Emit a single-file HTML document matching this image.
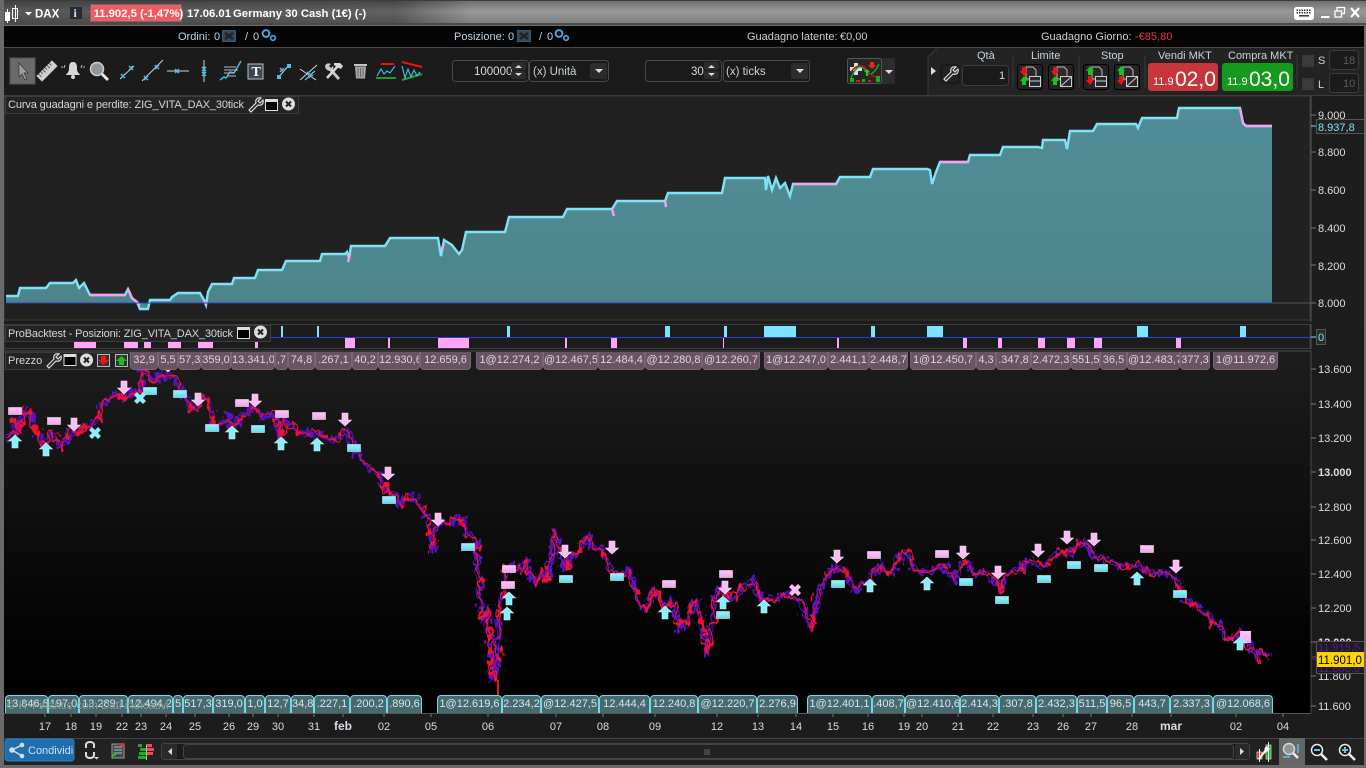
<!DOCTYPE html>
<html><head><meta charset="utf-8"><title>DAX</title>
<style>
html,body{margin:0;padding:0;background:#1a1a1a;width:1366px;height:768px;overflow:hidden}
body{position:relative;font-family:"Liberation Sans",Arial,sans-serif}
svg.m{position:absolute;left:0;top:0}
svg text{font-family:"Liberation Sans",Arial,sans-serif;font-size:11px;fill:#d6dde4}
.l,.b{position:absolute;font-size:11px;text-align:center;overflow:hidden;white-space:nowrap;box-sizing:border-box}
.l{top:352px;height:18px;line-height:17px;background:#6a5365;border:1px solid #7d6378;border-top:none;border-radius:0 0 4px 4px;color:#ddd6dc}
.b{top:695px;height:18px;line-height:17px;background:#456a6f;border:1px solid #72d8ec;border-bottom:none;border-radius:4px 4px 0 0;color:#dde6e6}
.wm{position:absolute;left:7px;top:700px;font-size:11.5px;color:#8f9a9a;white-space:nowrap}
</style></head><body>
<svg class="m" width="1366" height="768" viewBox="0 0 1366 768">
<defs>
<linearGradient id="tb" x1="0" y1="0" x2="0" y2="1"><stop offset="0" stop-color="#6b6b6b"/><stop offset=".45" stop-color="#989898"/><stop offset="1" stop-color="#7c7c7c"/></linearGradient>
<linearGradient id="tbl" x1="0" y1="0" x2="1" y2="0"><stop offset="0" stop-color="#000" stop-opacity=".42"/><stop offset=".29" stop-color="#000" stop-opacity=".36"/><stop offset=".345" stop-color="#000" stop-opacity="0"/></linearGradient>
<linearGradient id="pg" x1="0" y1="0" x2="0" y2="1"><stop offset="0" stop-color="#1d1d1d"/><stop offset=".8" stop-color="#030303"/><stop offset="1" stop-color="#000"/></linearGradient>
<linearGradient id="cy" x1="0" y1="0" x2="0" y2="1"><stop offset="0" stop-color="#9ff0fb"/><stop offset="1" stop-color="#62d9ec"/></linearGradient>
<linearGradient id="pk" x1="0" y1="0" x2="0" y2="1"><stop offset="0" stop-color="#fbc8f6"/><stop offset="1" stop-color="#f2a5ea"/></linearGradient>
<linearGradient id="eq" x1="0" y1="0" x2="0" y2="1"><stop offset="0" stop-color="#518d97"/><stop offset="1" stop-color="#4d848c"/></linearGradient>
<filter id="jit" filterUnits="userSpaceOnUse" x="0" y="350" width="1310" height="350" color-interpolation-filters="sRGB"><feTurbulence type="fractalNoise" baseFrequency="0.16 0.09" numOctaves="2" seed="4"/><feDisplacementMap in="SourceGraphic" scale="20" xChannelSelector="R" yChannelSelector="G"/></filter>
<filter id="jit2" filterUnits="userSpaceOnUse" x="0" y="350" width="1310" height="350" color-interpolation-filters="sRGB"><feTurbulence type="fractalNoise" baseFrequency="0.14 0.08" numOctaves="2" seed="11"/><feDisplacementMap in="SourceGraphic" scale="18" xChannelSelector="R" yChannelSelector="G"/></filter>
<filter id="jit3" filterUnits="userSpaceOnUse" x="0" y="350" width="1310" height="350" color-interpolation-filters="sRGB"><feTurbulence type="fractalNoise" baseFrequency="0.18 0.1" numOctaves="2" seed="23"/><feDisplacementMap in="SourceGraphic" scale="16" xChannelSelector="R" yChannelSelector="G"/></filter>
<g id="ad"><path d="M-3-13h6v7h3.500L0 0-6.500-6h3.500z" fill="#f8bff2" stroke="#fbdcf8" stroke-width=".6"/></g>
<g id="au"><path d="M-3 13h6v-7h3.500L0 0-6.500 6h3.500z" fill="#8beefa" stroke="#c6f7fc" stroke-width=".6"/></g>
<rect id="rp" x="-6.500" y="-3.500" width="13" height="7" fill="url(#pk)" stroke="#f9dcf6" stroke-width=".6"/>
<rect id="rc" x="-6.500" y="-3.500" width="13" height="7" fill="url(#cy)" stroke="#bff5fb" stroke-width=".6"/>
<path id="xc" d="M-6-3l3-3 3 3 3-3 3 3-3 3 3 3-3 3-3-3-3 3-3-3 3-3z"/>
<path id="px" d="M6 440 10 435 14 432 17 420 20 432 24 410 30 415 36 430 42 448 48 437 53 432 58 443 62 448 70 430 78 435 85 425 92 428 97 420 102 405 110 397 118 395 124 400 130 393 135 390 140 398 143 368 150 378 155 378 165 375 175 377 182 390 186 400 192 410 198 408 205 395 212 415 213 428 220 425 228 415 232 430 240 418 248 415 255 405 262 420 270 412 278 420 280 443 285 420 295 430 305 435 315 432 322 437 335 440 345 430 355 445 360 460 370 468 380 475 385 490 395 495 400 505 410 495 420 505 428 518 432 553 435 530 440 520 450 525 460 516 468 535 476 540 480 590 483 620 487 610 490 640 493 680 497 665 500 610 505 570 512 565 520 575 525 560 530 575 537 585 542 570 547 580 555 527 560 550 565 570 573 555 580 550 588 535 595 550 602 548 608 565 617 575 630 570 637 600 645 610 655 590 665 610 672 600 680 630 690 615 697 600 707 655 715 600 722 585 730 600 740 590 755 580 760 600 770 600 785 595 800 600 812 630 818 590 825 580 835 565 845 570 855 590 870 580 880 565 890 575 905 550 915 570 925 572 935 570 945 565 955 580 965 560 975 575 985 570 1000 590 1005 575 1020 570 1030 560 1045 565 1060 550 1070 555 1080 540 1095 555 1105 560 1120 565 1135 565 1150 575 1165 570 1175 580 1185 598 1200 610 1212 620 1222 630 1228 640 1235 635 1240 632 1245 640 1250 648 1257 660 1262 650 1270 658"/>
<g id="gear"><circle cx="5" cy="4.500" r="3.400" fill="none" stroke="#4aa5e0" stroke-width="2"/><circle cx="12" cy="9" r="2.300" fill="none" stroke="#4aa5e0" stroke-width="1.600"/></g>
<g id="xb"><rect x=".5" y=".5" width="13" height="11" fill="#3a4650" stroke="#2f5c7c"/><path d="M3 3l8 6M11 3l-8 6" stroke="#1b2228" stroke-width="2.400"/></g>
<g id="w"><path d="M2 14l7-7c-1-3 1-6 5-5l-3 3 2 2 3-3c1 4-2 6-5 5l-7 7z" fill="none" stroke="#ddd" stroke-width="1.200"/></g>
<g id="ordb"><rect x=".5" y=".5" width="25" height="25" rx="3" fill="#242424" stroke="#000"/><path d="M9 3h7l3 3v9H9z" fill="#2a2a2a" stroke="#bbb"/></g>
<clipPath id="pc"><rect x="4" y="370" width="1306" height="325"/></clipPath>
</defs>

<!-- frame -->
<rect width="1366" height="768" fill="#6e6e6e"/>
<rect x="0" y="0" width="1366" height="25" fill="url(#tb)"/>
<rect x="0" y="0" width="1366" height="25" fill="url(#tbl)"/>
<rect x="0" y="0" width="1366" height="1" fill="#3c3c3c"/>
<rect x="0" y="23" width="1366" height="2" fill="#4a4a4a"/>
<!-- title bar -->
<g fill="#fff"><rect x="5" y="12" width="5" height="9"/><rect x="7" y="9" width="1" height="14"/><rect x="12.500" y="8.500" width="5" height="10" fill="none" stroke="#fff"/><rect x="15" y="5" width="1" height="17"/><path d="M25 12h7l-3.500 3.500z"/></g>
<text x="35" y="17.500" style="fill:#fff;font-weight:bold;font-size:11.500px">DAX</text>
<rect x="70" y="7" width="12" height="12" fill="#252a35"/><text x="73.500" y="17" style="fill:#dfe3e6;font-weight:bold;font-family:'Liberation Serif';font-size:12px">i</text>
<rect x="91" y="5" width="90" height="16" fill="#ef5b60" stroke="#d9797c" stroke-width=".8"/>
<text x="93.500" y="17" style="fill:#fff;font-weight:bold;font-size:11.300px">11.902,5 (-1,47%)</text>
<text x="187" y="17" style="fill:#fff;font-weight:bold;font-size:11.300px">17.06.01</text>
<text x="233" y="17" style="fill:#fff;font-weight:bold;font-size:11.300px">Germany 30 Cash (1€) (-)</text>
<rect x="1294" y="7" width="20" height="13" rx="2.500" fill="#fff"/><g fill="none" stroke="#333" stroke-width="1.500" stroke-dasharray="1.500 1"><path d="M1296.500 10.300h15M1296.500 12.800h15"/><path d="M1299 15.800h10" stroke-dasharray="none"/></g>
<rect x="1321" y="16" width="8.500" height="2" fill="#fff"/>
<path d="M1337 11v-3.500h7.500v6h-3M1335 11h6.500v6h-6.500z" fill="none" stroke="#fff" stroke-width="1.300"/>
<path d="M1351 8l8 9M1359 8l-8 9" stroke="#fff" stroke-width="2.200"/>

<!-- info bar -->
<rect x="4" y="26" width="1362" height="21" fill="#050505"/>
<rect x="4" y="47" width="1362" height="1" fill="#4c4c4c"/>
<text x="178" y="40" style="fill:#bfd2e0">Ordini:</text><text x="214" y="40" style="fill:#bfd2e0">0</text><use href="#xb" x="222" y="30"/><text x="245" y="40" style="fill:#bfd2e0">/</text><text x="253" y="40" style="fill:#bfd2e0">0</text><use href="#gear" x="261" y="29"/>
<text x="454" y="40" style="fill:#bfd2e0">Posizione:</text><text x="508" y="40" style="fill:#bfd2e0">0</text><use href="#xb" x="517" y="30"/><text x="539" y="40" style="fill:#bfd2e0">/</text><text x="547" y="40" style="fill:#bfd2e0">0</text><use href="#gear" x="554" y="29"/>
<text x="747" y="40" style="fill:#c6d0d6">Guadagno latente:</text><text x="840" y="40" style="fill:#c6d0d6">€0,00</text>
<text x="1041" y="40" style="fill:#c6d0d6">Guadagno Giorno:</text><text x="1135" y="40" style="fill:#e5393b">-€85,80</text>

<!-- toolbar -->
<rect x="4" y="48" width="1362" height="47" fill="#1b1b1b"/>
<rect x="4" y="95" width="1362" height="1" fill="#3c3c3c"/>
<rect x="10" y="58" width="25" height="26" fill="#6a6a6a" stroke="#555"/>
<path d="M19 63v14l3-3 3 6 2-1-3-6h4z" fill="#9aa3a9" stroke="#333" stroke-width=".7"/>
<g transform="rotate(-45 47 71)"><rect x="36" y="67" width="22" height="8" fill="#cfcfcf"/><path d="M39 67v4M42 67v3M45 67v4M48 67v3M51 67v4M54 67v3" stroke="#555"/></g>
<path d="M73 62c-4 0-4 4-4 7 0 3-2 4-3 6h14c-1-2-3-3-3-6 0-3 0-7-4-7z" fill="#d8d8d8"/><circle cx="73" cy="77" r="2" fill="#d8d8d8"/><path d="M65 65l-1 3M82 65l-1 3M62 66l0 2M84 66l0 2" stroke="#bbb"/>
<circle cx="97" cy="69" r="6.500" fill="#8f979c" stroke="#cfcfcf" stroke-width="1.500"/><path d="M102 74l6 6" stroke="#e8e8e8" stroke-width="3"/>
<g stroke="#cfd6da" stroke-width="1" fill="none"><path d="M120 79l14-13"/><path d="M142 81l21-21"/><path d="M167 71h22"/><path d="M204 60v22"/></g>
<g stroke="#4fbfea" stroke-width="1.500"><path d="M121 74l4 4M125 74l-4 4M129 66l4 4M133 66l-4 4M144 76l4 4M148 76l-4 4M155 65l4 4M159 65l-4 4M175 69l4 4M179 69l-4 4M202 67l4 4M206 67l-4 4M202 72l4 4M206 72l-4 4"/></g>
<path d="M220 80l4-3 2 1 4-6 4 1 7-12" fill="none" stroke="#45b8ea" stroke-width="1.500"/><path d="M224 67h12M224 70h14M224 73h10M228 76h8" stroke="#bbb"/>
<rect x="248" y="64" width="15" height="15" fill="#3a4652" stroke="#b8c0c8"/><text x="251.500" y="76" style="font-family:'Liberation Serif';font-size:14px;font-weight:bold;fill:#fff">T</text>
<path d="M278 78l11-13" stroke="#cfd6da"/><rect x="277" y="75" width="4" height="4" fill="#4fbfea"/><rect x="287" y="64" width="4" height="4" fill="#4fbfea"/><path d="M280 68l4 4M284 68l-4 4" stroke="#4fbfea" stroke-width="1.500"/>
<path d="M300 80l17-15M300 69l16 11" stroke="#cfd6da"/><path d="M307 72l6 4M313 72l-4 6M305 80l10-9" stroke="#4fbfea" stroke-width="1.300"/>
<path d="M329 68l10 11" stroke="#c8c8c8" stroke-width="3"/><path d="M325 66c1-3 4-3 6-2l-2 2 2 2 2-2c1 2 0 5-3 5-2 0-5-2-5-5z" fill="#c8c8c8"/><path d="M338 66l-11 12" stroke="#d8d8d8" stroke-width="2.500"/><path d="M334 63h6l3 3-2 3-4-2-3-2z" fill="#d8d8d8"/>
<rect x="354" y="64" width="13" height="2" fill="#c4c4c4"/><path d="M355 66.500h11l-1 12h-9z" fill="#aaa"/><path d="M358 68v9M360.500 68v9M363 68v9" stroke="#666"/>
<path d="M381 64h13" stroke="#e81414" stroke-width="2"/><path d="M376 78h20" stroke="#1ea01e" stroke-width="2"/><path d="M377 76l4-7 3 5 3-3 3 2 5-7" fill="none" stroke="#3cc0ea" stroke-width="1.100"/>
<path d="M402 62l20 5" stroke="#e81414" stroke-width="2"/><path d="M402 80l20-6" stroke="#1ea01e" stroke-width="2"/><path d="M402 66l3 12 3-9 3 8 3-7 3 6 3-4" fill="none" stroke="#3cc0ea" stroke-width="1.100"/>

<!-- inputs -->
<g fill="#1a1a1a" stroke="#4a4a4a">
<rect x="452.500" y="60.500" width="76" height="21" rx="3"/><rect x="529.500" y="60.500" width="79" height="21" rx="3"/>
<rect x="645.500" y="60.500" width="76" height="21" rx="3"/><rect x="723.500" y="60.500" width="86" height="21" rx="3"/></g>
<text x="474" y="75" style="fill:#d5dce2;font-size:11.500px">100000</text><text x="533" y="75" style="fill:#c8d2da;font-size:11.500px">(x) Unità</text>
<text x="691" y="75" style="fill:#d5dce2;font-size:11.500px">30</text><text x="726" y="75" style="fill:#c8d2da;font-size:11.500px">(x) ticks</text>
<g fill="#2c2c2c"><rect x="511" y="62" width="15" height="8" rx="2"/><rect x="511" y="71" width="15" height="8" rx="2"/><rect x="704" y="62" width="15" height="8" rx="2"/><rect x="704" y="71" width="15" height="8" rx="2"/><rect x="590" y="63" width="17" height="16" rx="2"/><rect x="791" y="63" width="17" height="16" rx="2"/><rect x="882" y="58" width="13" height="26" rx="2"/></g>
<g fill="#ddd"><path d="M515 68h7l-3.500-3zM515 73h7l-3.500 3zM708 68h7l-3.500-3zM708 73h7l-3.500 3z"/><path d="M595 69h8l-4 4zM796 69h8l-4 4zM885 70h8l-4 4z"/></g>
<rect x="847.500" y="58.500" width="34" height="25" rx="2" fill="#262626" stroke="#555"/>
<path d="M854 63h4v4h4v4h-4v4h-4v-4h-4v-4h4z" fill="#d8dee2"/>
<path d="M851 78c5-12 10-14 14-8s8 6 14-6" fill="none" stroke="#1ea01e" stroke-width="1.500"/><path d="M851 72c6-8 12-8 16-2s8 8 12 6" fill="none" stroke="#b01818" stroke-width="1.500"/>
<path d="M864 72l3-3 3 3h-2v4h-2v-4z" fill="#16cf16"/><path d="M870 62h4v3h2l-4 4-4-4h2z" fill="#ee2020"/>
<g fill="#18b018"><rect x="850" y="78" width="4" height="4"/><rect x="862" y="79" width="3" height="3"/><rect x="876" y="76" width="4" height="6"/></g><g fill="#d02020"><rect x="856" y="80" width="4" height="2"/><rect x="868" y="80" width="3" height="2"/></g>

<!-- order panel -->
<path d="M928 95v-38l9-9h429v47z" fill="#232323"/>
<path d="M928 95v-38l9-9" fill="none" stroke="#3a3a3a"/>
<path d="M931 67l5 4-5 4z" fill="#ddd"/>
<rect x="941" y="65" width="18" height="18" rx="3" fill="#222" stroke="#111"/><use href="#w" x="942" y="65"/>
<rect x="962.500" y="65.500" width="46" height="20" rx="3" fill="#1b1b1b" stroke="#3c3c3c"/><text x="999" y="79" style="fill:#d8d8d8">1</text>
<text x="977" y="59" style="fill:#c8d4dc">Qtà</text><text x="1031" y="59" style="fill:#c8d4dc">Limite</text><text x="1101" y="59" style="fill:#c8d4dc">Stop</text><text x="1158" y="59" style="fill:#c8d4dc">Vendi MKT</text><text x="1228" y="59" style="fill:#c8d4dc">Compra MKT</text>
<path d="M1013 55v32M1079 55v32M1145 55v32M1297 55v32" stroke="#3b3b3b"/>
<use href="#ordb" x="1017" y="64"/><use href="#ordb" x="1048" y="64"/><use href="#ordb" x="1083" y="64"/><use href="#ordb" x="1114" y="64"/>
<g>
<rect x="1029.500" y="76.500" width="11" height="10" fill="#2a2a2a" stroke="#ccc"/><path d="M1030 81h10" stroke="#ccc"/>
<rect x="1060.500" y="76.500" width="11" height="10" fill="#2a2a2a" stroke="#ccc"/><path d="M1061 86l10-9" stroke="#ccc"/>
<rect x="1095.500" y="76.500" width="11" height="10" fill="#2a2a2a" stroke="#ccc"/><path d="M1096 81h10" stroke="#ccc"/>
<rect x="1126.500" y="76.500" width="11" height="10" fill="#2a2a2a" stroke="#ccc"/><path d="M1127 86l10-9" stroke="#ccc"/>
<path d="M1022 67h4v4h2l-4 5-4-5h2zM1053 67h4v4h2l-4 5-4-5h2z" fill="#e81414"/>
<path d="M1024 76l4 5h-2v4h-4v-4h-2zM1055 76l4 5h-2v4h-4v-4h-2z" fill="#15c515"/>
<path d="M1090 66l4 5h-2v4h-4v-4h-2zM1121 66l4 5h-2v4h-4v-4h-2z" fill="#15c515"/>
<path d="M1088 76h4v4h2l-4 5-4-5h2zM1119 76h4v4h2l-4 5-4-5h2z" fill="#e81414"/>
</g>
<rect x="1148" y="63" width="70" height="28" rx="3" fill="#c7363b"/>
<rect x="1222" y="63" width="71" height="28" rx="3" fill="#149a1c"/>
<text x="1153" y="85" style="fill:#fff;font-size:11px">11.9</text><text x="1175" y="86" style="fill:#fff;font-size:21px">02,0</text>
<text x="1227" y="85" style="fill:#fff;font-size:11px">11.9</text><text x="1249" y="86" style="fill:#fff;font-size:21px">03,0</text>
<rect x="1302" y="55" width="12" height="12" fill="#3a3a3a"/><rect x="1302" y="78" width="12" height="12" fill="#3a3a3a"/>
<text x="1318" y="64" style="fill:#c8d4dc">S</text><text x="1318" y="88" style="fill:#c8d4dc">L</text>
<rect x="1329.500" y="50.500" width="29" height="19" rx="3" fill="#1b1b1b" stroke="#3c3c3c"/><rect x="1329.500" y="73.500" width="29" height="19" rx="3" fill="#1b1b1b" stroke="#3c3c3c"/>
<text x="1343" y="64" style="fill:#5c5c5c">18</text><text x="1343" y="87" style="fill:#5c5c5c">10</text>

<!-- chart 1 -->
<rect x="4" y="96" width="1362" height="226" fill="#1d1d1d"/>
<rect x="4" y="96" width="1306" height="224" fill="#212121" stroke="#3c3c3c"/>
<path d="M1311 96v226" stroke="#555"/>
<path d="M6 303V296H18L20 288H46L50 283H73L76 280 79 288 84 283 90 295H125L128 289 132 298 137 302 140 309H148L150 300H170L172 297 178 293H200L204 300 206 305 208 292 212 284H232L234 278H255L258 270H282L286 261H320L322 254H345L347 252 349 258 351 246H385L390 238H438L441 256 444 240 452 245 459 254 462 250 466 232H505L509 217H563L567 209H612L617 201H665L668 193H722L725 178H765L766 190 768 176 772 190 776 178 780 188 785 183 790 196 793 184H836L840 177H870L873 169H927L930 170 932 184 936 172 940 162H968L970 155H1000L1003 147H1038L1042 148 1043 140H1065L1067 149 1070 131H1093L1097 124H1136L1138 128 1142 118H1175L1177 118 1179 108H1240L1243 123 1246 126H1272V303Z" fill="url(#eq)"/>
<path d="M6 296H18L20 288H46L50 283H73L76 280 79 288 84 283 90 295H125L128 289 132 298 137 302 140 309H148L150 300H170L172 297 178 293H200L204 300 206 305 208 292 212 284H232L234 278H255L258 270H282L286 261H320L322 254H345L347 252 349 258 351 246H385L390 238H438L441 256 444 240 452 245 459 254 462 250 466 232H505L509 217H563L567 209H612L617 201H665L668 193H722L725 178H765L766 190 768 176 772 190 776 178 780 188 785 183 790 196 793 184H836L840 177H870L873 169H927L930 170 932 184 936 172 940 162H968L970 155H1000L1003 147H1038L1042 148 1043 140H1065L1067 149 1070 131H1093L1097 124H1136L1138 128 1142 118H1175L1177 118 1179 108H1240L1243 123 1246 126H1272" fill="none" stroke="#7fe3f6" stroke-width="2.400"/>
<g fill="none" stroke="#f3a3ee" stroke-width="2.400"><path d="M90 295H125M128 289 132 298 137 302 140 305M204 300 206 305M441 250 444 244M612 209 614 216M793 184H836M940 162H968M1240 108 1243 123 1246 126H1272M665 200 666 207M350 254 348 262"/></g>
<path d="M6 303H1272" stroke="#2b3fc0"/><path d="M1272 303H1311" stroke="#555"/>
<g><text x="1318" y="119" style="fill:#ddd">9.000</text><text x="1318" y="156" style="fill:#ddd">8.800</text><text x="1318" y="194" style="fill:#ddd">8.600</text><text x="1318" y="232" style="fill:#ddd">8.400</text><text x="1318" y="270" style="fill:#ddd">8.200</text><text x="1318" y="307" style="fill:#ddd">8.000</text></g>
<path d="M1311 115h5M1311 152h5M1311 190h5M1311 228h5M1311 265h5M1311 303h5" stroke="#777"/>
<rect x="1316.500" y="119.500" width="48" height="14" fill="#222" stroke="#555"/><text x="1318" y="131" style="fill:#7fe3f6">8.937,8</text><path d="M1311 126h5" stroke="#7fe3f6"/>
<rect x="5.500" y="96.500" width="293" height="17" fill="#242424" stroke="#3c3c3c"/>
<text x="8" y="108" textLength="236" style="fill:#cfd8df;font-size:11px">Curva guadagni e perdite: ZIG_VITA_DAX_30tick</text>
<use href="#w" x="247" y="96"/><rect x="265.500" y="99.500" width="12" height="11" fill="#000" stroke="#ddd"/><rect x="265" y="99" width="13" height="3" fill="#ddd"/>
<circle cx="288.500" cy="104" r="6.500" fill="#ddd"/><path d="M286 101.500l5 5M291 101.500l-5 5" stroke="#222" stroke-width="2"/>

<!-- strip -->
<rect x="4" y="322" width="1362" height="29" fill="#1c1c1c"/>
<rect x="4" y="324.500" width="1306" height="24" fill="#1c1c1c" stroke="#3c3c3c"/>
<g fill="#7ce4ff"><rect x="281" y="326" width="2" height="11"/><rect x="317" y="326" width="2" height="11"/><rect x="507" y="326" width="3" height="11"/><rect x="665" y="326" width="5" height="11"/><rect x="724" y="326" width="3" height="11"/><rect x="764" y="326" width="32" height="11"/><rect x="871" y="326" width="4" height="11"/><rect x="927" y="326" width="16" height="11"/><rect x="1137" y="326" width="11" height="11"/><rect x="1240" y="326" width="6" height="11"/></g>
<path d="M4 337.500H1311" stroke="#2b3fd0"/>
<g fill="#ffa4f8"><rect x="74" y="338" width="22" height="10"/><rect x="124" y="338" width="14" height="10"/><rect x="144" y="338" width="7" height="10"/><rect x="168" y="338" width="13" height="10"/><rect x="198" y="338" width="15" height="10"/><rect x="255" y="338" width="3" height="10"/><rect x="345" y="338" width="10" height="10"/><rect x="388" y="338" width="2" height="10"/><rect x="438" y="338" width="31" height="10"/><rect x="565" y="338" width="2" height="10"/><rect x="611" y="338" width="6" height="10"/><rect x="723" y="338" width="1" height="10"/><rect x="837" y="338" width="2" height="10"/><rect x="963" y="338" width="4" height="10"/><rect x="998" y="338" width="4" height="10"/><rect x="1038" y="338" width="7" height="10"/><rect x="1067" y="338" width="8" height="10"/><rect x="1094" y="338" width="8" height="10"/><rect x="1176" y="338" width="5" height="10"/></g>
<rect x="5.500" y="325.500" width="265" height="16" fill="#242424" stroke="#3c3c3c"/>
<text x="8" y="337" textLength="225" style="fill:#cfd8df;font-size:11px">ProBacktest - Posizioni: ZIG_VITA_DAX_30tick</text>
<rect x="237.500" y="327.500" width="12" height="11" fill="#000" stroke="#ddd"/><rect x="237" y="327" width="13" height="3" fill="#ddd"/>
<circle cx="260.500" cy="332" r="6.500" fill="#ddd"/><path d="M258 329.500l5 5M263 329.500l-5 5" stroke="#222" stroke-width="2"/>
<path d="M1311 324v25" stroke="#555"/><path d="M1311 337h5" stroke="#7ce4ff"/>
<rect x="1316.500" y="329.500" width="9" height="15" fill="#2b2b2b" stroke="#555"/><text x="1318" y="341" style="fill:#7ce4ff">0</text>

<!-- price chart -->
<rect x="4" y="351" width="1362" height="362" fill="#1c1c1c"/>
<rect x="4" y="351" width="1307" height="362" fill="url(#pg)"/>
<path d="M1311 351v362M4 351H1311" stroke="#4a4a4a"/>
<g clip-path="url(#pc)">
<g fill="none" stroke-linejoin="bevel">
<g filter="url(#jit)" stroke="#5a12c4" stroke-width="2.400"><use href="#px"/></g>
<g filter="url(#jit3)" stroke="#5a12c4" stroke-width="2.200"><use href="#px"/></g>
<g filter="url(#jit2)" stroke="#f01030" stroke-width="2.200"><use href="#px"/></g>
</g>
<path d="M498 680v15" stroke="#ee1020" stroke-width="2"/>
</g>
<!-- markers -->
<g>
<use href="#rp" x="15" y="411"/><use href="#rp" x="54" y="421"/><use href="#rp" x="242" y="403"/><use href="#rp" x="282" y="414"/><use href="#rp" x="319" y="416"/><use href="#rp" x="509" y="569"/><use href="#rp" x="508" y="585"/><use href="#rp" x="669" y="584"/><use href="#rp" x="726" y="574"/><use href="#rp" x="874" y="555"/><use href="#rp" x="942" y="554"/><use href="#rp" x="1147" y="549"/>
<rect x="1240" y="631" width="11" height="12" fill="url(#pk)"/>
<use href="#rc" x="150" y="391"/><use href="#rc" x="180" y="394"/><use href="#rc" x="212" y="428"/><use href="#rc" x="258" y="429"/><use href="#rc" x="354" y="448"/><use href="#rc" x="389" y="500"/><use href="#rc" x="468" y="547"/><use href="#rc" x="566" y="579"/><use href="#rc" x="617" y="577"/><use href="#rc" x="723" y="615"/><use href="#rc" x="838" y="584"/><use href="#rc" x="966" y="582"/><use href="#rc" x="1002" y="600"/><use href="#rc" x="1044" y="579"/><use href="#rc" x="1074" y="565"/><use href="#rc" x="1101" y="568"/><use href="#rc" x="1180" y="594"/>
<use href="#ad" x="124" y="394"/><use href="#ad" x="74" y="431"/><use href="#ad" x="198" y="406"/><use href="#ad" x="255" y="407"/><use href="#ad" x="345" y="426"/><use href="#ad" x="388" y="480"/><use href="#ad" x="438" y="526"/><use href="#ad" x="565" y="558"/><use href="#ad" x="612" y="554"/><use href="#ad" x="725" y="594"/><use href="#ad" x="837" y="563"/><use href="#ad" x="963" y="559"/><use href="#ad" x="998" y="579"/><use href="#ad" x="1038" y="557"/><use href="#ad" x="1067" y="544"/><use href="#ad" x="1094" y="546"/><use href="#ad" x="1176" y="573"/><use href="#ad" x="168" y="372"/>
<use href="#au" x="15" y="435"/><use href="#au" x="46" y="443"/><use href="#au" x="232" y="426"/><use href="#au" x="281" y="437"/><use href="#au" x="317" y="438"/><use href="#au" x="509" y="592"/><use href="#au" x="507" y="607"/><use href="#au" x="665" y="606"/><use href="#au" x="723" y="596"/><use href="#au" x="764" y="600"/><use href="#au" x="870" y="579"/><use href="#au" x="927" y="577"/><use href="#au" x="1137" y="572"/><use href="#au" x="1240" y="637"/>
<use href="#xc" x="95" y="433" fill="#8beefa"/><use href="#xc" x="140" y="398" fill="#8beefa"/><use href="#xc" x="795" y="590" fill="#f8bff2"/>
</g>
<!-- right axis price -->
<g><text x="1318" y="373" style="fill:#ddd">13.600</text><text x="1318" y="408" style="fill:#ddd">13.400</text><text x="1318" y="442" style="fill:#ddd">13.200</text><text x="1318" y="476" style="fill:#ddd;font-weight:bold">13.000</text><text x="1318" y="511" style="fill:#ddd">12.800</text><text x="1318" y="544" style="fill:#ddd">12.600</text><text x="1318" y="578" style="fill:#ddd">12.400</text><text x="1318" y="612" style="fill:#ddd">12.200</text><text x="1318" y="646" style="fill:#ddd;font-weight:bold">12.000</text><text x="1318" y="680" style="fill:#ddd">11.800</text><text x="1318" y="710" style="fill:#ddd">11.600</text></g>
<path d="M1311 369h5M1311 404h5M1311 438h5M1311 472h5M1311 507h5M1311 540h5M1311 574h5M1311 608h5M1311 642h5M1311 676h5M1311 706h5" stroke="#777"/>
<rect x="1316.500" y="641.500" width="49" height="32" fill="#1c1c1c" stroke="#555"/>
<text x="1318" y="651" style="fill:#5a18a0">11.915,5</text><text x="1318" y="672" style="fill:#5a18a0">11.886,0</text>
<rect x="1317" y="652" width="48" height="15" fill="#ffd500"/><text x="1318" y="664" style="fill:#000;font-size:11.500px">11.901,0</text>
<path d="M1312 657h4" stroke="#e02020"/><path d="M1312 659h4" stroke="#3030d0"/>
<!-- Prezzo box -->
<rect x="5.500" y="352.500" width="124" height="17" fill="#242424" stroke="#3c3c3c"/>
<text x="8" y="364" style="fill:#cfd8df;font-size:11px">Prezzo</text>
<use href="#w" x="45" y="352"/><rect x="64" y="354.500" width="12" height="11" fill="#000" stroke="#ddd"/><rect x="63.500" y="354" width="13" height="3" fill="#ddd"/>
<circle cx="86.500" cy="360" r="6.500" fill="#ddd"/><path d="M84 357.500l5 5M89 357.500l-5 5" stroke="#222" stroke-width="2"/>
<path d="M97.500 354.500h12v12h-12z" fill="#333" stroke="#bbb"/><path d="M101 356h5v4h3l-5.500 5-5.500-5h3z" fill="#ee1515"/>
<path d="M115.500 354.500h12v12h-12z" fill="#333" stroke="#bbb"/><path d="M119 365h5v-4h3l-5.500-5-5.500 5h3z" fill="#15c515"/>

<!-- date axis -->
<rect x="4" y="713" width="1362" height="26" fill="#1c1c1c"/>
<rect x="4" y="713" width="1307" height="1" fill="#555"/>
<rect x="4" y="738" width="1362" height="1" fill="#444"/>
<g text-anchor="middle"><text x="45" y="730">17</text><text x="71" y="730">18</text><text x="96" y="730">19</text><text x="122" y="730">22</text><text x="141" y="730">23</text><text x="166" y="730">24</text><text x="195" y="730">25</text><text x="229" y="730">26</text><text x="253" y="730">29</text><text x="278" y="730">30</text><text x="314" y="730">31</text><text x="343" y="730" style="font-weight:bold;font-size:12px">feb</text><text x="384" y="730">02</text><text x="431" y="730">05</text><text x="488" y="730">06</text><text x="556" y="730">07</text><text x="603" y="730">08</text><text x="655" y="730">09</text><text x="717" y="730">12</text><text x="758" y="730">13</text><text x="796" y="730">14</text><text x="833" y="730">15</text><text x="868" y="730">16</text><text x="904" y="730">19</text><text x="922" y="730">20</text><text x="958" y="730">21</text><text x="993" y="730">22</text><text x="1033" y="730">23</text><text x="1063" y="730">26</text><text x="1091" y="730">27</text><text x="1132" y="730">28</text><text x="1171" y="730" style="font-weight:bold;font-size:12px">mar</text><text x="1236" y="730">02</text><text x="1283" y="730">04</text></g>
<path d="M45 714v3M71 714v3M96 714v3M122 714v3M141 714v3M166 714v3M195 714v3M229 714v3M253 714v3M278 714v3M314 714v3M343 714v3M384 714v3M431 714v3M488 714v3M556 714v3M603 714v3M655 714v3M717 714v3M758 714v3M796 714v3M833 714v3M868 714v3M904 714v3M922 714v3M958 714v3M993 714v3M1033 714v3M1063 714v3M1091 714v3M1132 714v3M1171 714v3M1236 714v3M1283 714v3" stroke="#777"/>

<!-- bottom bar -->
<rect x="4" y="739" width="1362" height="26" fill="#222"/>
<rect x="5" y="739" width="69" height="22" rx="3" fill="#1f6fb0" stroke="#2a80c4"/>
<path d="M12 750l10-5M12 750l10 6" stroke="#cfe0ee" stroke-width="1.500"/><circle cx="12" cy="750" r="2.800" fill="#cfe0ee"/><circle cx="22" cy="745" r="2.300" fill="#cfe0ee"/><circle cx="22" cy="756" r="2.300" fill="#cfe0ee"/>
<text x="28" y="754" style="fill:#cfe0ee;font-size:11px">Condividi</text>
<path d="M86 748v-3c0-4 8-4 8 0v3M86 752v3c0 4 8 4 8 0v-3" fill="none" stroke="#ddd" stroke-width="2"/><path d="M94 757h5l-2.500 2.500z" fill="#ddd"/>
<rect x="112" y="744" width="12" height="14" fill="#3a4a50" stroke="#999"/><path d="M114 747h8M114 750h8M114 753h8" stroke="#bbb"/><path d="M118 744h6v4z" fill="#e03030"/><path d="M112 758v-4h5z" fill="#20c020"/>
<g><rect x="138" y="744" width="4" height="3" fill="#1ab01a"/><rect x="146" y="744" width="6" height="3" fill="#e85050"/><rect x="140" y="748" width="6" height="3" fill="#1ab01a"/><rect x="147" y="748" width="7" height="3" fill="#e85050"/><rect x="139" y="752" width="7" height="3" fill="#1ab01a"/><rect x="147" y="752" width="6" height="3" fill="#e85050"/><rect x="138" y="756" width="8" height="3" fill="#1ab01a"/><rect x="146" y="745" width="1" height="15" fill="#bbb"/></g>
<rect x="161.500" y="743.500" width="1088" height="16" rx="3" fill="#1a1a1a" stroke="#444"/>
<rect x="162" y="744" width="15" height="15" rx="2" fill="#2a2a2a"/><path d="M172 748v7l-4-3.500z" fill="#ddd"/>
<rect x="183.500" y="744.500" width="1050" height="14" rx="3" fill="#222" stroke="#444"/>
<path d="M704 750h6M704 752h6M704 754h6" stroke="#666"/>
<rect x="1235" y="744" width="14" height="15" rx="2" fill="#2a2a2a"/><path d="M1240 748v7l4-3.500z" fill="#ddd"/>
<rect x="1266" y="745" width="5" height="14" fill="#15b515" stroke="#fff" stroke-width=".6"/><path d="M1268.500 742v20" stroke="#fff"/><rect x="1257" y="752" width="5" height="7" fill="#d03030" stroke="#fff" stroke-width=".6"/><path d="M1259.500 749v13" stroke="#fff"/><path d="M1259 759l7-9" stroke="#fff" stroke-width="2.200"/><circle cx="1267" cy="749" r="2.500" fill="#fff"/>
<rect x="1279" y="738" width="26" height="27" fill="#666"/><circle cx="1289" cy="749" r="5.500" fill="#8f979c" stroke="#d8d8d8" stroke-width="1.500"/><path d="M1293 753l5 5" stroke="#eee" stroke-width="2.500"/><path d="M1298 744v9M1283 757h7" stroke="#4fc5f0" stroke-width="1.500"/>
<circle cx="1317" cy="750" r="5.500" fill="#111" stroke="#eee" stroke-width="1.500"/><path d="M1314 750h6" stroke="#4fc5f0" stroke-width="2"/><path d="M1321 754l6 6" stroke="#eee" stroke-width="2.500"/>
<circle cx="1345" cy="750" r="5.500" fill="#111" stroke="#eee" stroke-width="1.500"/><path d="M1342 750h6M1345 747v6" stroke="#4fc5f0" stroke-width="2"/><path d="M1349 754l6 6" stroke="#eee" stroke-width="2.500"/>
<rect x="0" y="0" width="4" height="768" fill="#6a6a6a"/><rect x="0" y="765" width="1366" height="3" fill="#6a6a6a"/><rect x="1364" y="26" width="2" height="742" fill="#6a6a6a"/>
</svg>

<div class="l" style="left:130px;width:28px">32,9</div><div class="l" style="left:158px;width:20px">5,5</div><div class="l" style="left:178px;width:23px">57,3</div><div class="l" style="left:201px;width:30px">359,0</div><div class="l" style="left:231px;width:44px">13.341,0</div><div class="l" style="left:275px;width:13px">,7</div><div class="l" style="left:288px;width:27px">74,8</div><div class="l" style="left:315px;width:37px">.267,1</div><div class="l" style="left:352px;width:26px">40,2</div><div class="l" style="left:378px;width:42px">12.930,6</div><div class="l" style="left:420px;width:51px">12.659,6</div>
<div class="l" style="left:476px;width:67px">1@12.274,2</div><div class="l" style="left:543px;width:55px">@12.467,5</div><div class="l" style="left:598px;width:47px">12.484,4</div><div class="l" style="left:645px;width:57px">@12.280,8</div><div class="l" style="left:702px;width:58px">@12.260,7</div>
<div class="l" style="left:764px;width:64px">1@12.247,0</div><div class="l" style="left:828px;width:41px">2.441,1</div><div class="l" style="left:869px;width:39px">2.448,7</div>
<div class="l" style="left:910px;width:66px">1@12.450,7</div><div class="l" style="left:976px;width:20px">4,3</div><div class="l" style="left:996px;width:35px">.347,8</div><div class="l" style="left:1031px;width:40px">2.472,3</div><div class="l" style="left:1071px;width:29px">551,5</div><div class="l" style="left:1100px;width:27px">36,5</div><div class="l" style="left:1127px;width:53px">@12.483,7</div><div class="l" style="left:1180px;width:30px">377,3</div><div class="l" style="left:1213px;width:65px">1@11.972,6</div>

<div class="b" style="left:5px;width:43px">13.846,5</div><div class="b" style="left:48px;width:31px">197,0</div><div class="b" style="left:79px;width:49px">13.289,1</div><div class="b" style="left:128px;width:45px">12.494,2</div><div class="b" style="left:173px;width:10px">5</div><div class="b" style="left:183px;width:30px">517,3</div><div class="b" style="left:213px;width:32px">319,0</div><div class="b" style="left:245px;width:20px">1,0</div><div class="b" style="left:265px;width:26px">12,7</div><div class="b" style="left:291px;width:23px">34,8</div><div class="b" style="left:314px;width:36px">.227,1</div><div class="b" style="left:350px;width:37px">.200,2</div><div class="b" style="left:387px;width:35px">.890,6</div>
<div class="b" style="left:437px;width:65px">1@12.619,6</div><div class="b" style="left:502px;width:39px">2.234,2</div><div class="b" style="left:541px;width:58px">@12.427,5</div><div class="b" style="left:599px;width:51px">12.444,4</div><div class="b" style="left:650px;width:48px">12.240,8</div><div class="b" style="left:698px;width:59px">@12.220,7</div><div class="b" style="left:757px;width:41px">2.276,9</div>
<div class="b" style="left:807px;width:65px">1@12.401,1</div><div class="b" style="left:872px;width:33px">.408,7</div><div class="b" style="left:905px;width:55px">@12.410,6</div><div class="b" style="left:960px;width:39px">2.414,3</div><div class="b" style="left:999px;width:37px">.307,8</div><div class="b" style="left:1036px;width:41px">2.432,3</div><div class="b" style="left:1077px;width:30px">511,5</div><div class="b" style="left:1107px;width:27px">96,5</div><div class="b" style="left:1134px;width:36px">443,7</div><div class="b" style="left:1170px;width:43px">2.337,3</div><div class="b" style="left:1213px;width:60px">@12.068,6</div>
<div class="wm">© IT-Finance.com Dati indicativi</div>
</body></html>
